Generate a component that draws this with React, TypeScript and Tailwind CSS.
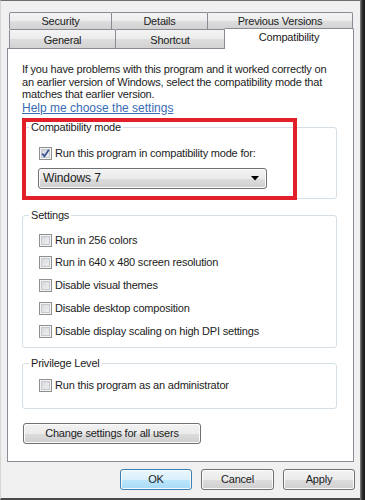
import React from 'react';

const face =
  'bg-[linear-gradient(to_bottom,#f2f2f2_0%,#ebebeb_50%,#dddddd_50%,#cfcfcf_100%)] shadow-[inset_0_0_0_1px_#fbfbfb]';

function Tab({ label, className }: { label: string; className: string }) {
  return (
    <div
      className={`border border-b-0 border-[#898c95] rounded-t-[2px] text-center bg-[linear-gradient(to_bottom,#f4f4f4_0%,#ececec_50%,#dedede_50%,#d2d2d2_100%)] ${className}`}
    >
      {label}
    </div>
  );
}

function Checkbox({ checked = false }: { checked?: boolean }) {
  return (
    <span className="relative block w-[13px] h-[13px] border border-[#8e8f8f] bg-linear-to-br from-[#cfd2d6] to-[#f6f6f6] shadow-[inset_0_0_0_1px_#f4f4f4,inset_0_0_0_2px_#c5c8cc]">
      {checked && (
        <svg viewBox="0 0 11 11" className="absolute left-0 top-0 w-[11px] h-[11px]">
          <path d="M2.2 5.6 L4.4 8.2 L8.9 1.8" fill="none" stroke="#3f5594" strokeWidth="1.8" />
        </svg>
      )}
    </span>
  );
}

function CheckRow({ label, checked }: { label: string; checked?: boolean }) {
  return (
    <div className="flex items-center gap-[3px] h-[13px]">
      <Checkbox checked={checked} />
      <span className="leading-[13px]">{label}</span>
    </div>
  );
}

function Group({ title, className, children }: { title: string; className: string; children: React.ReactNode }) {
  return (
    <fieldset className={`w-[315px] border border-[#d5dfe5] rounded-[3px] ${className}`}>
      <legend className="ml-[6px] px-[2px] leading-[13px]">{title}</legend>
      {children}
    </fieldset>
  );
}

function Button({ label, primary, className }: { label: string; primary?: boolean; className: string }) {
  return (
    <button
      className={`h-[21px] rounded-[3px] border text-center leading-[19px] ${
        primary
          ? 'border-[#3c7fb1] bg-[linear-gradient(to_bottom,#eaf6fd_0%,#d9f0fc_50%,#bee6fd_50%,#a7d9f5_100%)] shadow-[inset_0_0_0_1px_#f4fbfe]'
          : `border-[#707070] ${face}`
      } ${className}`}
    >
      {label}
    </button>
  );
}

export default function App() {
  return (
    <div className="w-[365px] h-[500px] flex bg-[#f0f0f0] overflow-hidden text-[11px] tracking-[-0.2px] text-[#1c1c1c] font-['Liberation_Sans',Arial,sans-serif]">
      <div className="w-[360px] h-full flex flex-col border-t border-[#6f6f6f] border-l border-l-[#d6d6d6] border-b-[2px] border-b-[#4a4a4a]">
        <div className="pt-[11px] pl-[8px]">
          <div className="flex h-[17px] leading-[16px]">
            <Tab label="Security" className="w-[103px]" />
            <Tab label="Details" className="w-[97px] -ml-px" />
            <Tab label="Previous Versions" className="w-[146px] -ml-px" />
          </div>
          <div className="flex items-start h-[19px]">
            <Tab label="General" className="w-[107px] h-[19px] pt-[3px] leading-[14px]" />
            <Tab label="Shortcut" className="w-[110px] h-[19px] pt-[3px] leading-[14px] -ml-px" />
            <div className="relative z-10 -ml-px -mt-px w-[130px] h-[21px] border border-b-0 border-[#898c95] rounded-t-[2px] bg-white text-center pt-[1px] leading-[14px]">
              Compatibility
            </div>
          </div>
        </div>

        <div className="ml-[6px] w-[347px] h-[414px] border border-[#898c95] bg-white pl-[14px] pt-[14px]">
          <p className="leading-[12.5px]">
            If you have problems with this program and it worked correctly on
            <br />
            an earlier version of Windows, select the compatibility mode that
            <br />
            matches that earlier version.
          </p>
          <a className="block w-fit text-[12px] tracking-normal leading-[15px] text-[#3a6cb4] underline decoration-[#3a6cb4]">
            Help me choose the settings
          </a>

          <div className="relative mt-[5px]">
            <Group title="Compatibility mode" className="">
              <div className="pl-[16px] pt-[13px] pb-[9px]">
                <CheckRow label="Run this program in compatibility mode for:" checked />
                <div
                  className={`mt-[8px] -ml-px w-[229px] h-[21px] rounded-[3px] border border-[#707070] ${face} flex items-center justify-between pl-[4px] pr-[7px]`}
                >
                  <span className="text-[12px] tracking-[-0.1px]">Windows 7</span>
                  <svg width="8" height="5" viewBox="0 0 8 5">
                    <path d="M0 0 H8 L4 4.5 Z" fill="#000" />
                  </svg>
                </div>
              </div>
            </Group>
            <div className="absolute left-0 -top-[2.5px] w-[275px] h-[82px] border-4 border-[#e2202a] z-10 pointer-events-none" />
          </div>

          <Group title="Settings" className="mt-[10px]">
            <div className="pl-[16px] pt-[12px] pb-[9px] flex flex-col gap-[9.75px]">
              <CheckRow label="Run in 256 colors" />
              <CheckRow label="Run in 640 x 480 screen resolution" />
              <CheckRow label="Disable visual themes" />
              <CheckRow label="Disable desktop composition" />
              <CheckRow label="Disable display scaling on high DPI settings" />
            </div>
          </Group>

          <Group title="Privilege Level" className="mt-[9px]">
            <div className="pl-[16px] pt-[9px] pb-[16px]">
              <CheckRow label="Run this program as an administrator" />
            </div>
          </Group>

          <Button label="Change settings for all users" className="mt-[14px] ml-px w-[178px] block" />
        </div>

        <div className="flex justify-end gap-[9px] pr-[5px] mt-[7px]">
          <Button label="OK" primary className="w-[72px]" />
          <Button label="Cancel" className="w-[73px]" />
          <Button label="Apply" className="w-[72px]" />
        </div>
      </div>
      <div className="w-[5px] h-full bg-linear-to-r from-[#8a8a8a] via-[#2b2b2b] to-[#1a1a1a]" />
    </div>
  );
}
